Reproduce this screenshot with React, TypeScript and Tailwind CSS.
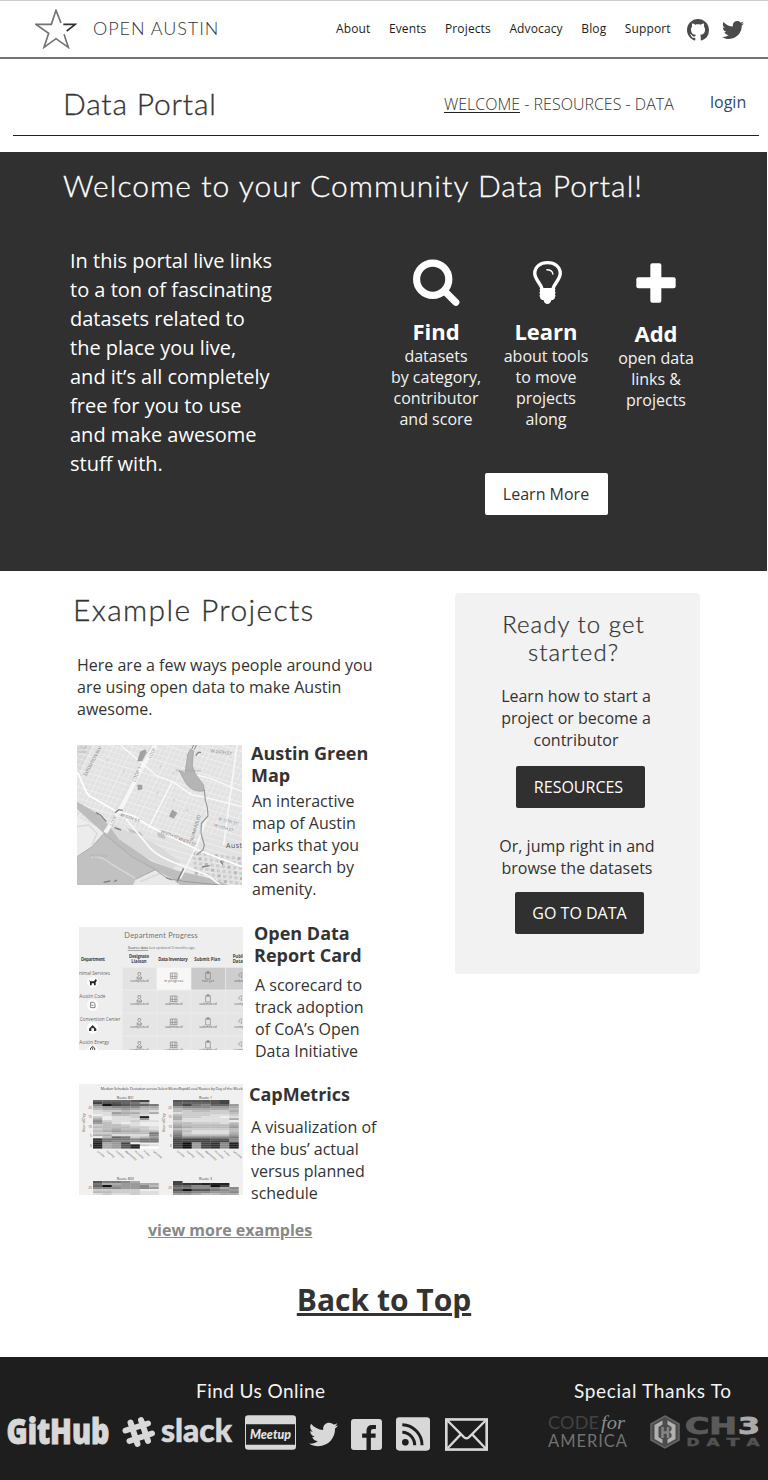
import React from "react";
import { FaTwitter } from "react-icons/fa";

const NAV = ["About", "Events", "Projects", "Advocacy", "Blog", "Support"];

function GithubMark() {
  return (
    <svg viewBox="0 0 16 16" className="h-[22px] w-[22px] fill-[#4a4a4a]">
      <path d="M8 0C3.58 0 0 3.58 0 8c0 3.54 2.29 6.53 5.47 7.59.4.07.55-.17.55-.38 0-.19-.01-.82-.01-1.49-2.01.37-2.53-.49-2.69-.94-.09-.23-.48-.94-.82-1.13-.28-.15-.68-.52-.01-.53.63-.01 1.08.58 1.23.82.72 1.21 1.87.87 2.33.66.07-.52.28-.87.51-1.07-1.78-.2-3.64-.89-3.64-3.95 0-.87.31-1.59.82-2.15-.08-.2-.36-1.02.08-2.12 0 0 .67-.21 2.2.82.64-.18 1.32-.27 2-.27.68 0 1.36.09 2 .27 1.53-1.04 2.2-.82 2.2-.82.44 1.1.16 1.92.08 2.12.51.56.82 1.27.82 2.15 0 3.07-1.87 3.75-3.65 3.95.29.25.54.73.54 1.48 0 1.07-.01 1.93-.01 2.2 0 .21.15.46.55.38A8.013 8.013 0 0016 8c0-4.42-3.58-8-8-8z" />
    </svg>
  );
}

function Star() {
  return (
    <svg viewBox="0 0 126 120" className="h-10 w-[42px] fill-none" strokeWidth="5">
      <path stroke="#737373" d="M78 42 L63 4 L49 46 H3 L41 73 L27 115 L63 89 L100 115 L87 76" />
      <path stroke="#303030" d="M85 46 H121 L95 66" />
    </svg>
  );
}

function Magnifier() {
  return (
    <svg viewBox="0 0 47 47" className="h-[47px] w-[47px] fill-none stroke-white">
      <circle cx="19.7" cy="20.2" r="16.1" strokeWidth="7.2" />
      <path d="M32 32.5 L42.8 43.2" strokeWidth="7.2" strokeLinecap="round" />
    </svg>
  );
}

function Bulb() {
  return (
    <svg viewBox="0 0 86 128" className="ml-[3px] h-[43px] w-[29px] fill-none stroke-white">
      <path
        strokeWidth="10"
        strokeLinejoin="round"
        d="M27 85 C26 70 6 57 5 37 C5 17 22 5 43 5 C64 5 81 17 81 37 C80 57 60 70 59 85 Z"
      />
      <path strokeWidth="4" strokeLinecap="round" d="M41 26 C51 26 58 31 59 39" />
      <path
        className="fill-white"
        stroke="none"
        d="M21 82 H65 Q68 85 65 89 Q69 94 65 99 Q69 104 65 108 Q66 113 59 116 H55 Q51 128 43 128 Q34 128 31 116 H27 Q20 113 21 108 Q17 104 21 99 Q17 94 21 89 Q18 85 21 82Z"
      />
    </svg>
  );
}

function Plus() {
  return (
    <svg viewBox="0 0 120 120" className="h-10 w-10 fill-white">
      <rect x="43" y="1" width="33" height="118" rx="6" />
      <rect x="1" y="43" width="118" height="33" rx="6" />
    </svg>
  );
}

const parcels = [
  [40, 60], [90, 40], [140, 75], [185, 70], [205, 40], [250, 60], [290, 80], [240, 140], [290, 160], [330, 190],
];

function MapThumb() {
  const grid: React.ReactNode[] = [];
  for (let i = 0; i < 50; i++) {
    const x = -100 + i * 15;
    grid.push(<path key={"a" + i} d={`M${x + 90} 0 L${x - 40} 270`} strokeWidth={i % 4 ? 1.4 : 2.2} />);
  }
  for (let i = 0; i < 30; i++) {
    const y = -130 + i * 17;
    grid.push(<path key={"b" + i} d={`M0 ${y} L495 ${y + 150}`} strokeWidth={i % 3 ? 1.4 : 2.2} />);
  }
  const downtown: React.ReactNode[] = [];
  for (let r = 0; r < 7; r++) {
    for (let c = 0; c < 9; c++) {
      downtown.push(
        <rect key={r + "-" + c} x={345 + c * 17 + r * 2} y={320 + r * 15 + c * 2} width="10" height="9" fill={(r * 3 + c) % 4 ? "#cdcdcd" : "#b9b9b9"} />
      );
    }
  }
  return (
    <svg viewBox="0 0 495 420" className="h-[140px] w-[165px] shrink-0" fontFamily="Open Sans, sans-serif">
      <rect width="495" height="420" fill="#e2e2e2" />
      <path d="M0 0 H48 L0 95Z" fill="#d8d8d8" />
      <g stroke="#f4f4f4" fill="none">{grid}</g>
      <g fill="#d3d3d3">
        {parcels.map(([x, y], i) => (
          <rect key={i} x={x} y={y} width="5" height="8" transform={`rotate(25 ${x} ${y})`} />
        ))}
      </g>
      {downtown}
      <path d="M100 235 L240 300 L310 352 L285 374 L150 310 L75 255Z" fill="#dadada" />
      <path d="M150 250 L190 262 L200 274 L160 262Z M240 262 L262 268 L266 282 L244 276Z" fill="#c4c4c4" />
      <path d="M0 170 L60 205 L95 240 L125 282 L225 350 L300 377 L400 400 L455 420 L300 420 L270 400 L215 375 L155 332 L80 265 L0 192Z" fill="#bdbdbd" />
      <path d="M0 335 L45 305 L80 266 L125 300 L165 330 L235 374 L175 403 L168 420 H0Z" fill="#c1c1c1" />
      <path d="M0 215 L60 246 L80 266 L45 305 L0 335Z" fill="#ececec" />
      <path d="M170 420 L180 405 L235 375 L280 400 L310 420Z" fill="#e9e9e9" />
      <path d="M0 245 L35 240 L60 265 L45 300 M42 336 Q70 330 100 355 L175 400 M190 410 L250 385 L300 410" stroke="#d8d8d8" strokeWidth="4" fill="none" />
      <path d="M0 80 C22 118 22 150 50 160 L120 200 L170 213 L220 245 L365 316 L495 365" stroke="#fff" strokeWidth="5" fill="none" />
      <path d="M145 220 L220 310 C260 350 320 360 390 390 L430 420" stroke="#fbfbfb" strokeWidth="5" fill="none" />
      <path d="M236 0 L190 75 L145 165 L85 263" stroke="#f6f6f6" strokeWidth="13" fill="none" />
      <path d="M224 0 L182 73 L137 163 L85 253" stroke="#d3d3d3" strokeWidth="2" fill="none" />
      <path d="M130 0 L190 50 L235 90 L290 112 L345 150 L385 157 L495 185 M285 112 L215 248 M315 80 L400 100 L495 140" stroke="#fafafa" strokeWidth="4" fill="none" />
      <path d="M385 157 L392 210 L360 300 L310 400 M480 0 L460 150 L440 300" stroke="#f8f8f8" strokeWidth="5" fill="none" />
      <path d="M340 13 L332 28 L324 85 L306 76 L325 112 C340 135 360 142 382 137 L380 120 C360 95 346 75 346 55 L350 18Z" fill="#b5b5b5" stroke="#9c9c9c" strokeWidth="2" />
      <path d="M344 13 L350 0 M352 14 L358 0" stroke="#8a8a8a" strokeWidth="3" />
      <path d="M382 135 L385 165 L391 188 L393 213 L373 235 L372 265 L382 300 L378 315 L358 330" fill="none" stroke="#959595" strokeWidth="3.5" />
      <path d="M182 48 L190 20 L205 14 L208 22 L194 48Z M182 120 L194 120 L196 132 L183 135Z M277 214 L286 195 L300 204 L290 220Z" fill="#a2a2a2" stroke="#808080" strokeWidth="1" />
      <path d="M115 203 L125 194 L137 196 M57 203 L70 210 L88 230 M113 248 L132 255 M356 32 L364 22 L372 22 M375 366 L398 362 M430 348 L438 359 M268 398 L285 405 M300 410 L320 370 M80 412 L100 408 M112 410 L120 405" stroke="#808080" strokeWidth="4" fill="none" />
      <path d="M0 335 L45 305 L80 266 L165 335 L235 374 L175 403" fill="none" stroke="#a5a5a5" strokeWidth="2.5" />
      <path d="M235 374 L270 400 L320 409 L430 420" fill="none" stroke="#959595" strokeWidth="2.5" />
      <g fill="#858585" fontSize="14">
        <text transform="translate(28 94) rotate(-62)" textLength="98">EXPOSITION BLV</text>
        <text transform="translate(175 112) rotate(-67)">LOOP 1</text>
        <text transform="translate(220 40) rotate(-60)" fontSize="12">LOOP</text>
        <text transform="translate(106 243) rotate(-65)" fontSize="12">LOOP</text>
        <text transform="translate(128 212) rotate(21)">W 5TH ST</text>
        <text transform="translate(250 263) rotate(22)" textLength="112">W 6TH ST W 6TH ST</text>
        <text transform="translate(347 290) rotate(-73)" textLength="82">N LAMAR BLVD</text>
        <text transform="translate(400 22) rotate(8)" textLength="64">W 24TH ST</text>
        <text transform="translate(423 224) rotate(16)" fontSize="12">W 12TH ST</text>
        <text transform="translate(410 244) rotate(16)" fontSize="12">W 11TH ST</text>
        <text x="296" y="81" fill="#a0a0a0" fontSize="12">Pease District</text>
        <text x="1" y="11" fill="#aaa" fontSize="10">n Golf</text>
        <text x="1" y="23" fill="#aaa" fontSize="10">ourse</text>
        <text x="38" y="337" fill="#adadad" fontSize="11">Zilker Park</text>
      </g>
      <text x="447" y="310" fontSize="21" fill="#555" textLength="48">Aust</text>
    </svg>
  );
}

const DEPARTMENTS = ["nimal Services", "Austin Code", "Convention Center", "Austin Energy"];

function ProgressThumb() {
  return (
    <svg viewBox="0 0 492 369" className="h-[123px] w-[164px] shrink-0" fontFamily="Open Sans, sans-serif">
      <rect width="492" height="369" fill="#eeeeee" />
      <text x="136" y="33" fontFamily="Lato, sans-serif" fontSize="22" fill="#707070" textLength="220">Department Progress</text>
      <text x="146" y="67" fontSize="12" fill="#777" textLength="202">
        <tspan fill="#444" textDecoration="underline">Source data</tspan> last updated 3 months ago
      </text>
      <g fontSize="13" fontWeight="700" fill="#444" textAnchor="middle">
        <text x="42" y="102" textLength="72">Department</text>
        <text x="180" y="93" textLength="60">Designate</text>
        <text x="180" y="108">Liaison</text>
        <text x="282" y="102" textLength="88">Data Inventory</text>
        <text x="385" y="102" textLength="78">Submit Plan</text>
        <text x="461" y="93" textAnchor="start">Publi</text>
        <text x="461" y="108" textAnchor="start">Datas</text>
      </g>
      {DEPARTMENTS.map((name, r) => {
        const y = 122 + r * 69;
        return (
          <g key={name}>
            <text x={[0, 1, 2, 1][r]} y={y + 21} fontSize="14" fill="#666">{name}</text>
            <circle cx="41" cy={y + 43} r="17" fill="#fff" />
            {r === 0 && <path d="M30 158 L35 163 H45 L50 156 L54 160 L50 166 V175 H45 V169 H38 V175 H33 V165Z" fill="#222" />}
            {r === 1 && <path d="M35 226 H44 L48 230 V242 H35Z M38 235 H44" fill="none" stroke="#444" strokeWidth="2" />}
            {r === 2 && <path d="M30 312 V305 L41 294 L52 305 V312 H45 V304 H37 V312Z" fill="#333" />}
            {r === 3 && <path d="M41 361 V368 M35 369 V363 L41 358 L47 363 V369" fill="none" stroke="#444" strokeWidth="3" />}
            {[0, 1, 2, 3].map((c) => {
              const x = 131 + c * 103;
              const fill = r === 0 ? ["#e3e3e3", "#f7f7f7", "#c9c9c9", "#cecece"][c] : "#e5e5e5";
              const label = r === 0 ? ["completed", "in progress", "not yet", "unkn"][c] : ["completed", "submitted", "submitted", "comp"][c];
              const cx = c === 3 ? 486 : x + 50;
              return (
                <g key={c}>
                  <rect x={x} y={y} width="101" height="66" fill={fill} />
                  <g fill="none" stroke="#777" strokeWidth="1.8">
                    {c === 0 && <path d={`M${cx - 8} ${y + 31} L${cx} ${y + 22} L${cx + 8} ${y + 31}Z M${cx - 4} ${y + 22} V${y + 15} H${cx + 4} V${y + 22} M${cx - 8} ${y + 34} H${cx + 8}`} />}
                    {c === 1 && <path d={`M${cx - 10} ${y + 16} H${cx + 10} V${y + 33} H${cx - 10}Z M${cx - 4} ${y + 16} V${y + 33} M${cx + 4} ${y + 16} V${y + 33} M${cx - 10} ${y + 26} H${cx + 10}`} />}
                    {c === 2 && <path d={`M${cx - 7} ${y + 15} H${cx + 7} V${y + 34} H${cx - 7}Z M${cx - 3} ${y + 12} H${cx + 3} V${y + 17} H${cx - 3}Z`} />}
                    {c === 3 && <path d={`M${cx - 6} ${y + 27} Q${cx - 8} ${y + 15} ${cx + 4} ${y + 16} M${cx + 1} ${y + 21} V${y + 31}`} />}
                  </g>
                  <text x={c === 3 ? 466 : cx} y={y + 44} fontSize="11" fill="#5c5c5c" textAnchor={c === 3 ? "start" : "middle"}>{label}</text>
                </g>
              );
            })}
          </g>
        );
      })}
    </svg>
  );
}

/* One string per hour, one hex digit of lightness per weekday; a dot is a missing sample. */
const ROUTE_801 = [
  "666654.", "45567a.", "8145667", "a9888aa", "baa9abb", "dccbccd", "dd9aaca", "edbbcde",
  "ceddc2e", "aeddd9e", "8cddcdd", "9bdedee", "cbbcdee", "bbbbccd", "cbabbcd", "ba9aabb",
  "ccbbbb7", "aadddd8", "eb67cb9", "3777877", "3788877", "2a94e..", "2a952cd", "2a952ff",
];
const ROUTE_1 = [
  "555554.", "666654.", "6478669", "988899a", "baaaaab", "bcbbcca", "dcccccb", "bcccddc",
  "accdded", "addddda", "cddddde", "bbcccdb", "abbbbba", "9abbbb9", "bcccccb", "9bddddb",
  "8cdddda", "7bbbbb9", "6888887", "4444558", "4444448", "4194382", "4194382", "4194382",
];
const ROUTE_803 = ["5778a.", "7aa99aa", "619998b", "8889989", "cccccee", "bbcccdd", "dcddcdd"];
const ROUTE_3 = ["4......", "433222.", "668814.", "77888a8", "5155789", "7788998", "99abbaa"];

function Heat({ rows, x, y, h }: { rows: string[]; x: number; y: number; h: number }) {
  return (
    <g>
      {rows.map((row, r) =>
        row.split("").map((v, c) =>
          v === "." ? null : (
            <rect key={r + "-" + c} x={x + c * 28.1} y={y + r * h} width="28.6" height={h + 0.5} fill={`#${v}${v}${v}${v}${v}${v}`} />
          )
        )
      )}
    </g>
  );
}

const DAYS = ["Sunday", "Monday", "Tuesday", "Wednesday", "Thursday", "Friday", "Saturday"];

function MetricsThumb() {
  return (
    <svg viewBox="0 0 492 333" className="h-[111px] w-[164px] shrink-0" fontFamily="Open Sans, sans-serif" fill="#444">
      <rect width="492" height="333" fill="#f0f0f0" />
      <text x="65" y="18" fontSize="11.5" textLength="426">Median Schedule Deviation across Select MetroRapid/Local Routes by Day of the Week</text>
      <g fontSize="11" textAnchor="middle">
        <text x="139" y="44">Route 801</text>
        <text x="380" y="44">Route 1</text>
        <text x="139" y="287">Route 803</text>
        <text x="380" y="287">Route 3</text>
      </g>
      <Heat rows={ROUTE_801} x={42} y={48} h={6.05} />
      <Heat rows={ROUTE_1} x={282} y={48} h={6.05} />
      <Heat rows={ROUTE_803} x={42} y={291} h={6.05} />
      <Heat rows={ROUTE_3} x={282} y={291} h={6.05} />
      {[0, 240].map((dx) => (
        <g key={dx} fontSize="9" fill="#555">
          <text transform={`translate(${dx + 18} 145) rotate(-90)`} fontSize="10">Hour of Day</text>
          {["20", "15", "10", "5", "0"].map((t, i) => (
            <text key={t} x={dx + 38} y={74 + i * 28.5} textAnchor="end">{t}</text>
          ))}
          <text x={dx + 38} y="315" textAnchor="end">20</text>
          {DAYS.map((d, i) => (
            <text key={d} transform={`translate(${dx + 53 + i * 28} 203) rotate(38)`} fontSize="8">{d}</text>
          ))}
        </g>
      ))}
    </svg>
  );
}

function GithubLogo() {
  return (
    <svg viewBox="0 0 104 34" className="h-[34px] w-[104px]" fontFamily="Open Sans, sans-serif" fontWeight="800">
      <text x="0.5" y="29.3" fontSize="35" fill="#d8d8d8" stroke="#d8d8d8" strokeWidth="1" textLength="103" lengthAdjust="spacingAndGlyphs">GitHub</text>
    </svg>
  );
}

function SlackLogo() {
  return (
    <svg viewBox="0 0 111 34" className="h-[34px] w-[111px]">
      <g stroke="#d8d8d8" strokeWidth="6" strokeLinecap="round">
        <path d="M8.5 7.5 L15.5 29 M19 5 L26 26 M3.5 15.5 L26 8.5 M7.5 26 L30 18.5" />
      </g>
      <text x="39" y="26.5" fontFamily="Lato, sans-serif" fontWeight="900" fontSize="33" fill="#d8d8d8" stroke="#d8d8d8" strokeWidth="0.6" textLength="71" lengthAdjust="spacingAndGlyphs">slack</text>
    </svg>
  );
}

function MeetupLogo() {
  return (
    <svg viewBox="0 0 154 104" className="h-[35px] w-[51px]">
      <rect width="154" height="104" rx="10" fill="#d8d8d8" />
      <rect x="3" y="27" width="148" height="62" fill="#202020" />
      <text x="15" y="71" fontFamily="Lato, sans-serif" fontStyle="italic" fontWeight="900" fontSize="42" fill="#e4e4e4" textLength="124" lengthAdjust="spacingAndGlyphs">Meetup</text>
    </svg>
  );
}

function FacebookLogo() {
  return (
    <svg viewBox="0 0 92 92" className="h-[31px] w-[31px]">
      <rect width="92" height="92" rx="9" fill="#d8d8d8" />
      <path d="M46 92 V56 H33 V43 H46 V35 Q46 18 63 18 H74 V30 H66 Q59 30 59 37 V43 H73 V56 H59 V92Z" fill="#1e1e1e" />
    </svg>
  );
}

function RssLogo() {
  return (
    <svg viewBox="0 0 102 100" className="h-[34px] w-[34px]">
      <rect width="102" height="100" rx="10" fill="#d8d8d8" />
      <circle cx="28" cy="75" r="10" fill="#1e1e1e" />
      <path d="M19 45 A38 38 0 0 1 56 84 M19 22 A61 61 0 0 1 78 84" fill="none" stroke="#1e1e1e" strokeWidth="9" />
    </svg>
  );
}

function MailLogo() {
  return (
    <svg viewBox="0 0 130 99" className="h-[33px] w-[43px]" fill="none" stroke="#d8d8d8">
      <rect x="4" y="4" width="122" height="91" strokeWidth="8" />
      <path d="M5 5 L58 58 Q65 64 72 58 L125 5 M5 94 L47 50 M83 50 L125 94" strokeWidth="7" />
    </svg>
  );
}

function CodeForAmerica() {
  return (
    <svg viewBox="0 0 80 36" className="h-9 w-20">
      <g fontFamily="Lato, sans-serif">
        <text x="0" y="14.2" fontSize="18" fill="#424242" textLength="51">CODE</text>
        <text x="0" y="32" fontSize="16.5" fill="#727272" textLength="79">AMERICA</text>
      </g>
      <text x="53" y="14.2" fontFamily="Liberation Serif, serif" fontStyle="italic" fontSize="18" fill="#8c8c8c" textLength="24" lengthAdjust="spacingAndGlyphs">for</text>
    </svg>
  );
}

function Ch3Data() {
  return (
    <svg viewBox="0 0 110 34" className="h-[34px] w-[110px]">
      <path d="M15 1 L29 9 V25 L15 33 L1 25 V9Z" fill="#4c4c4c" stroke="#656565" strokeWidth="1.5" />
      <path d="M12.5 5.5 L4.5 10 V24 L12.5 28.5 V24.5 L8.5 22 V12 L12.5 9.5Z M17.5 5.5 L25.5 10 V24 L17.5 28.5 V24.5 L21.5 22 V19 L19.5 17 L21.5 15 V12 L17.5 9.5Z" fill="#b0b0b0" />
      <path d="M12.5 12 V23 M18 12 V23 M12.5 17.5 H18" stroke="#858585" strokeWidth="2.5" />
      <g fontFamily="DejaVu Sans, sans-serif" fontWeight="700">
        <text x="35" y="18.5" fontSize="22.5" fill="#5a5a5a" stroke="#5a5a5a" strokeWidth="0.9" textLength="52" lengthAdjust="spacingAndGlyphs">CH</text>
        <text x="88" y="18.5" fontSize="22.5" fill="#ababab" stroke="#ababab" strokeWidth="0.9" textLength="22" lengthAdjust="spacingAndGlyphs">3</text>
        <g fontSize="10.5" fill="#525252" stroke="#525252" strokeWidth="0.5">
          {["D", "A", "T", "A"].map((ch, i) => (
            <text key={i} x={36.5 + i * 20} y="31" textLength="13" lengthAdjust="spacingAndGlyphs">{ch}</text>
          ))}
        </g>
      </g>
    </svg>
  );
}

function Feature({ icon, title, lines, offset }: { icon: React.ReactNode; title: string; lines: string[]; offset?: boolean }) {
  return (
    <div className="flex w-[110px] flex-col items-center">
      <div className="flex h-[47px] items-center justify-center">{icon}</div>
      <h3 className={offset ? "mt-[13px] text-[22px] leading-7 font-bold" : "mt-[11px] text-[22px] leading-7 font-bold"}>{title}</h3>
      <p className="mt-px text-center text-base leading-[21px] whitespace-nowrap text-[#f2f2f2]">
        {lines.map((l) => (
          <span key={l} className="block">{l}</span>
        ))}
      </p>
    </div>
  );
}

export default function App() {
  return (
    <div className="min-h-[1480px] w-[768px] bg-white font-['Open_Sans',sans-serif] text-[#333]">
      <header className="flex h-[59px] items-start border-t border-b-2 border-t-[#ccc] border-b-[#737373] pl-[35px]">
        <div className="mt-2">
          <Star />
        </div>
        <span className="mt-[15px] ml-4 w-[243px] font-['Lato',sans-serif] text-lg leading-6 font-light tracking-[0.95px]">OPEN AUSTIN</span>
        <nav className="mt-[19px] flex w-[351px] gap-[18.5px] text-xs leading-[18px] tracking-[0.13px] text-[#1c1c1c]">
          {NAV.map((n) => (
            <a key={n}>{n}</a>
          ))}
        </nav>
        <div className="mt-[18px]">
          <GithubMark />
        </div>
        <FaTwitter className="mt-[18px] ml-[13px] h-[22px] w-[22px] text-[#4a4a4a]" />
      </header>

      <div className="mr-[9px] ml-[13px] flex h-[77px] border-b border-[#222] pl-[50px]">
        <h1 className="mt-[25px] w-[381px] font-['Lato',sans-serif] text-[30px] leading-[38px] font-light tracking-[0.8px] [-webkit-text-stroke:0.3px]">Data Portal</h1>
        <nav className="mt-[33px] w-[266px] text-base leading-6 font-light whitespace-nowrap">
          <a className="inline-block h-[21px] border-b border-[#222]">WELCOME</a> - RESOURCES - DATA
        </nav>
        <a className="mt-[31px] text-base leading-6 text-[#2c4a70]">login</a>
      </div>

      <section className="mt-4 h-[419px] w-[767px] bg-[#303030] text-white">
        <h2 className="pt-[14px] pl-[63px] font-['Lato',sans-serif] text-[30px] leading-[38px] font-light tracking-[1.05px] [-webkit-text-stroke:0.3px]">Welcome to your Community Data Portal!</h2>
        <div className="mt-[42px] flex pl-[70px]">
          <p className="w-[311px] text-xl leading-[29px]">
            In this portal live links<br />to a ton of fascinating<br />datasets related to<br />the place you live,<br />and it’s all completely<br />free for you to use<br />and make awesome<br />stuff with.
          </p>
          <div className="flex flex-col items-center pt-[13px]">
            <div className="flex h-[214px]">
              <Feature icon={<Magnifier />} title="Find" lines={["datasets", "by category,", "contributor", "and score"]} />
              <Feature icon={<Bulb />} title="Learn" lines={["about tools", "to move", "projects", "along"]} />
              <Feature icon={<Plus />} title="Add" lines={["open data", "links &", "projects"]} offset />
            </div>
            <button className="h-[42px] w-[123px] rounded-xs bg-white text-base text-[#333]">Learn More</button>
          </div>
        </div>
      </section>

      <main className="flex h-[647px]">
        <section className="w-[455px]">
          <h2 className="mt-[19px] ml-[73px] font-['Lato',sans-serif] text-[30px] leading-[38px] font-light tracking-[1.35px] [-webkit-text-stroke:0.3px]">Example Projects</h2>
          <p className="mt-[26px] ml-[77px] text-base leading-[22px]">
            Here are a few ways people around you<br />are using open data to make Austin<br />awesome.
          </p>
          <article className="mt-[22px] ml-[77px] flex h-[182px] gap-[9px]">
            <div className="pt-[3px]"><MapThumb /></div>
            <div>
              <h3 className="text-lg leading-[22px] font-bold">Austin Green<br />Map</h3>
              <p className="mt-1 ml-px text-base leading-[22px]">An interactive<br />map of Austin<br />parks that you<br />can search by<br />amenity.</p>
            </div>
          </article>
          <article className="mt-[-3px] ml-[79px] flex h-[159px] gap-[11px]">
            <div className="pt-[6px]"><ProgressThumb /></div>
            <div>
              <h3 className="mt-px text-lg leading-[22px] font-bold">Open Data<br />Report Card</h3>
              <p className="mt-2 ml-px text-base leading-[22px]">A scorecard to<br />track adoption<br />of CoA’s Open<br />Data Initiative</p>
            </div>
          </article>
          <article className="ml-[79px] flex gap-[6px]">
            <div className="pt-[4px]"><MetricsThumb /></div>
            <div>
              <h3 className="mt-[3px] text-lg leading-[22px] font-bold">CapMetrics</h3>
              <p className="mt-[11px] ml-0.5 text-base leading-[22px]">A visualization of<br />the bus’ actual<br />versus planned<br />schedule</p>
            </div>
          </article>
        </section>
        <aside className="mt-[22px] flex h-[381px] w-[245px] flex-col items-center rounded-sm bg-[#f2f2f2] text-center">
          <h2 className="mt-[17px] mr-2 font-['Lato',sans-serif] text-2xl leading-7 font-light tracking-[1.05px] [-webkit-text-stroke:0.25px]">Ready to get<br />started?</h2>
          <p className="mt-[19px] mr-[3px] text-base leading-[22px]">Learn how to start a<br />project or become a<br />contributor</p>
          <button className="mt-[15px] ml-[6px] h-[42px] w-[129px] shrink-0 rounded-xs bg-[#303030] pr-1 text-base text-white">RESOURCES</button>
          <p className="mt-[27px] mr-px text-base leading-[22px]">Or, jump right in and<br />browse the datasets</p>
          <button className="mt-[13px] ml-[4px] h-[42px] w-[129px] shrink-0 rounded-xs bg-[#303030] text-base text-white">GO TO DATA</button>
        </aside>
      </main>

      <div className="flex h-[139px] flex-col">
        <a className="ml-[148px] self-start text-base leading-6 font-bold text-[#888] underline">view more examples</a>
        <a className="mt-[38px] self-center text-[30px] leading-10 font-bold underline">Back to Top</a>
      </div>

      <footer className="flex h-[123px] bg-[#1e1e1e] pl-1.5 text-[#f4f4f4]">
        <section className="w-[542px]">
          <h4 className="mt-[22px] ml-[190px] font-['Lato',sans-serif] text-[19px] leading-6 tracking-[0.45px]">Find Us Online</h4>
          <div className="mt-3 flex items-start">
            <GithubLogo />
            <div className="ml-3"><SlackLogo /></div>
            <div className="ml-3"><MeetupLogo /></div>
            <FaTwitter className="mt-[5px] ml-[13px] h-[29px] w-[29px] text-[#d8d8d8]" />
            <div className="mt-1 ml-[13px]"><FacebookLogo /></div>
            <div className="mt-0.5 ml-[14px]"><RssLogo /></div>
            <div className="mt-[3px] ml-[15px]"><MailLogo /></div>
          </div>
        </section>
        <section>
          <h4 className="mt-[22px] ml-[26px] font-['Lato',sans-serif] text-[19px] leading-6 tracking-[0.68px]">Special Thanks To</h4>
          <div className="mt-3 flex">
            <CodeForAmerica />
            <div className="ml-[22px]"><Ch3Data /></div>
          </div>
        </section>
      </footer>
    </div>
  );
}
